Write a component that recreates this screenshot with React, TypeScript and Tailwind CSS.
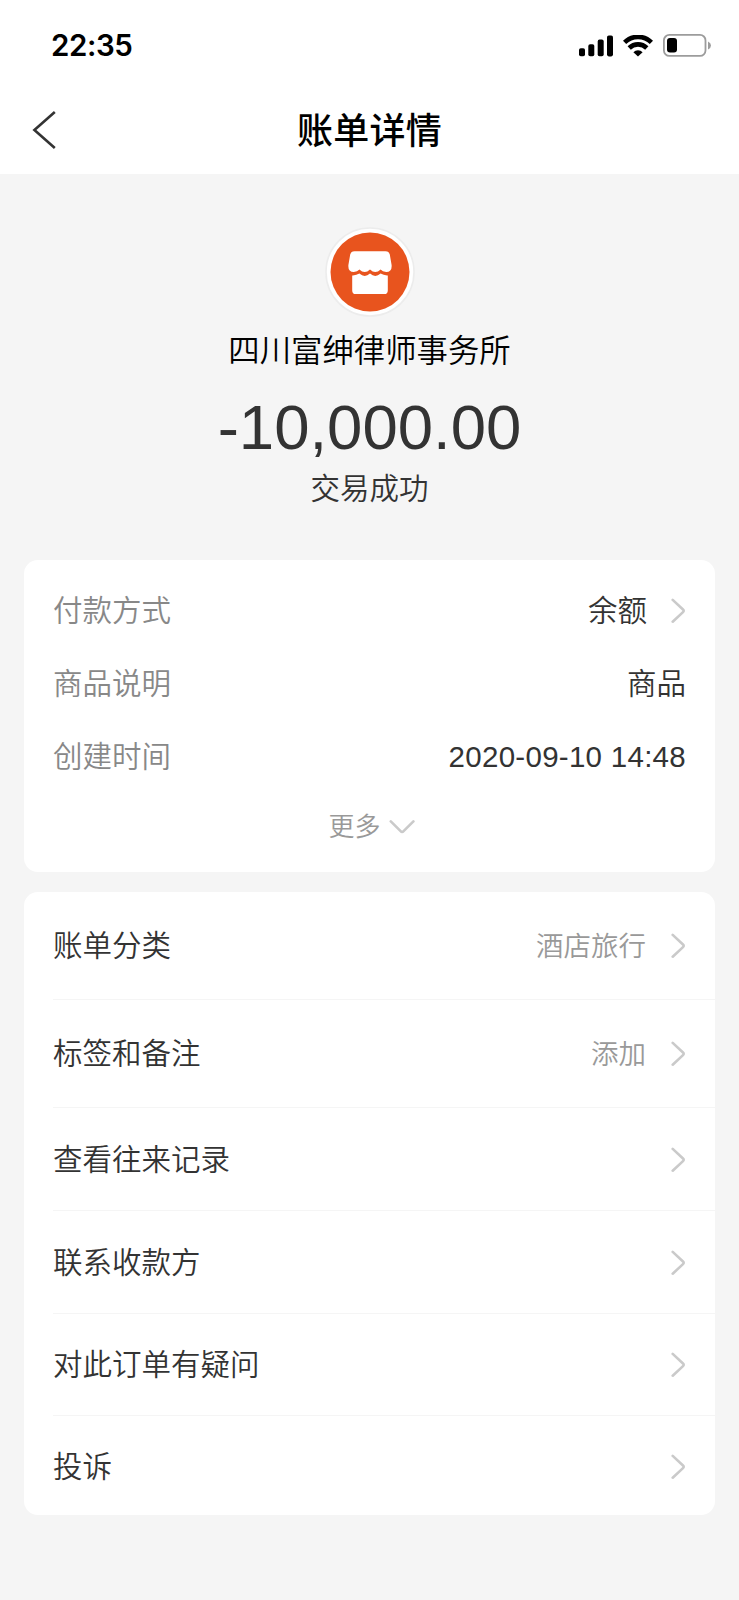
import type { ReactNode } from 'react';

type Entry = {
  label: string;
  value?: string;
  height: string;
};

const entries: Entry[] = [
  { label: '账单分类', value: '酒店旅行', height: 'h-[108px]' },
  { label: '标签和备注', value: '添加', height: 'h-[108px]' },
  { label: '查看往来记录', height: 'h-[103px] pt-[2px]' },
  { label: '联系收款方', height: 'h-[103px] pt-[2px]' },
  { label: '对此订单有疑问', height: 'h-[102px]' },
  { label: '投诉', height: 'h-[99px] pt-[3px]' },
];

function ChevronRight() {
  return (
    <svg className="ml-6 h-[26px] w-[15px] shrink-0" viewBox="0 0 15 26" fill="none" stroke="#cacaca" strokeWidth="2.6" strokeLinecap="round">
      <path d="M1.7 1.9 12 11.5Q13.4 12.8 12 14.1L1.7 23.7" />
    </svg>
  );
}

function ChevronDown() {
  return (
    <svg className="ml-2 h-[15px] w-[27px]" viewBox="0 0 27 15" fill="none" stroke="#cacaca" strokeWidth="2.6" strokeLinecap="round">
      <path d="M1.8 2.4 11.6 12.2Q13.1 13.8 14.6 12.2L24.4 2.4" />
    </svg>
  );
}

function StatusBar() {
  return (
    <div className="flex h-[90px] items-center justify-between pl-[51px] pr-[27px] pt-px">
      <span className="pt-px font-['Inter',sans-serif] text-[29.5px] font-semibold leading-none tracking-[-0.4px]">22:35</span>
      <div className="flex items-center">
        <svg className="h-[22px] w-[34px]" viewBox="0 0 34 22">
          <rect x="0" y="13.3" width="6" height="8" rx="1.8" />
          <rect x="9.3" y="9.3" width="6" height="12" rx="1.8" />
          <rect x="18.7" y="4.6" width="6" height="16.7" rx="1.8" />
          <rect x="28" y="0.4" width="6" height="21" rx="1.8" />
        </svg>
        <svg className="ml-[10px] h-[22px] w-[30px]" viewBox="0 0 30 22" fill="none" stroke="#000" strokeWidth="4.6">
          <path d="M1.6 7.3A19.2 19.2 0 0 1 28.4 7.3" />
          <path d="M6.2 13A12.5 12.5 0 0 1 23.8 13" />
          <path d="M15 21.6 10.4 17.2A6.4 6.4 0 0 1 19.6 17.2Z" fill="#000" stroke="none" />
        </svg>
        <svg className="ml-[10px] h-[24px] w-[49px]" viewBox="0 0 49 24">
          <rect x="0.9" y="0.9" width="41.6" height="21" rx="5.5" fill="none" stroke="#9c9c9c" strokeWidth="1.8" />
          <rect x="4" y="4" width="10" height="14.6" rx="3" />
          <path d="M45 7.6Q48 9 48 11.6T45 15.6Z" fill="#9c9c9c" />
        </svg>
      </div>
    </div>
  );
}

function StoreBadge() {
  return (
    <svg className="h-[90px] w-[90px]" viewBox="0 0 90 90">
      <circle cx="45" cy="45" r="44" fill="#fff" stroke="#ececec" strokeWidth="1.6" />
      <circle cx="45" cy="45" r="39.5" fill="#e8541e" />
      <path
        fill="#fff"
        d="M29.5 24.2H60.5Q64 24.2 64.8 27.6L66.6 38Q67.2 45 61.2 45Q57.6 45 55.6 42.6Q50.3 47.6 45 42.6Q39.7 47.6 34.4 42.6Q32.4 45 28.8 45Q22.8 45 23.4 38L25.2 27.6Q26 24.2 29.5 24.2Z"
      />
      <path fill="#fff" d="M27.2 48.4Q31.2 48.6 34.4 46.6Q39.7 51.2 45 46.6Q50.3 51.2 55.6 46.6Q58.8 48.6 62.8 48.4V63.4Q62.8 67 59.2 67H30.8Q27.2 67 27.2 63.4Z" />
    </svg>
  );
}

function DetailRow({ label, children }: { label: string; children: ReactNode }) {
  return (
    <div className="flex h-[73px] items-center justify-between text-[29.5px]">
      <span className="text-[#888]">{label}</span>
      <div className="flex items-center">{children}</div>
    </div>
  );
}

export default function App() {
  return (
    <div className="min-h-[1600px] w-full bg-[#f5f5f5] font-['Liberation_Sans','Noto_Sans_CJK_SC',sans-serif] font-[350] leading-none text-[#333]">
      <header className="h-[174px] bg-white text-black">
        <StatusBar />
        <div className="grid h-[80px] grid-cols-[1fr_auto_1fr] items-center">
          <svg className="ml-8 h-[40px] w-[24px]" viewBox="0 0 24 40" fill="none" stroke="#333" strokeWidth="2.6">
            <path d="M22.8 2 2.4 20 22.8 38" />
          </svg>
          <h1 className="pt-[3px] text-[36px] font-medium leading-none tracking-[0.2px]">账单详情</h1>
        </div>
      </header>

      <section className="flex flex-col items-center pt-[53px]">
        <StoreBadge />
        <p className="mt-[19px] text-[31.4px] leading-[32px] text-black">四川富绅律师事务所</p>
        <p className="mt-[27px] text-[63.5px] leading-[64px]">-10,000.00</p>
        <p className="mt-[15px] text-[29.5px] leading-[30px]">交易成功</p>
      </section>

      <section className="mx-6 mt-[56px] h-[312px] rounded-[14px] bg-white px-[29px] pt-[14px]">
        <DetailRow label="付款方式">
          <span>余额</span>
          <ChevronRight />
        </DetailRow>
        <DetailRow label="商品说明">商品</DetailRow>
        <DetailRow label="创建时间">
          <span className="tracking-[0.28px]">2020-09-10 14:48</span>
        </DetailRow>
        <button className="flex h-[67px] w-full items-center justify-center pl-[5px] text-[26px] text-[#999]">
          更多
          <ChevronDown />
        </button>
      </section>

      <section className="mx-6 mt-5 rounded-[14px] bg-white pl-[29px]">
        {entries.map((entry) => (
          <div key={entry.label} className={`flex items-center justify-between border-b border-[#f5f5f5] pr-[29px] last:border-b-0 ${entry.height}`}>
            <span className="text-[29.5px]">{entry.label}</span>
            <div className="flex items-center text-[27.5px] text-[#999]">
              {entry.value && <span className="pr-px pt-[2px]">{entry.value}</span>}
              <ChevronRight />
            </div>
          </div>
        ))}
      </section>
    </div>
  );
}
